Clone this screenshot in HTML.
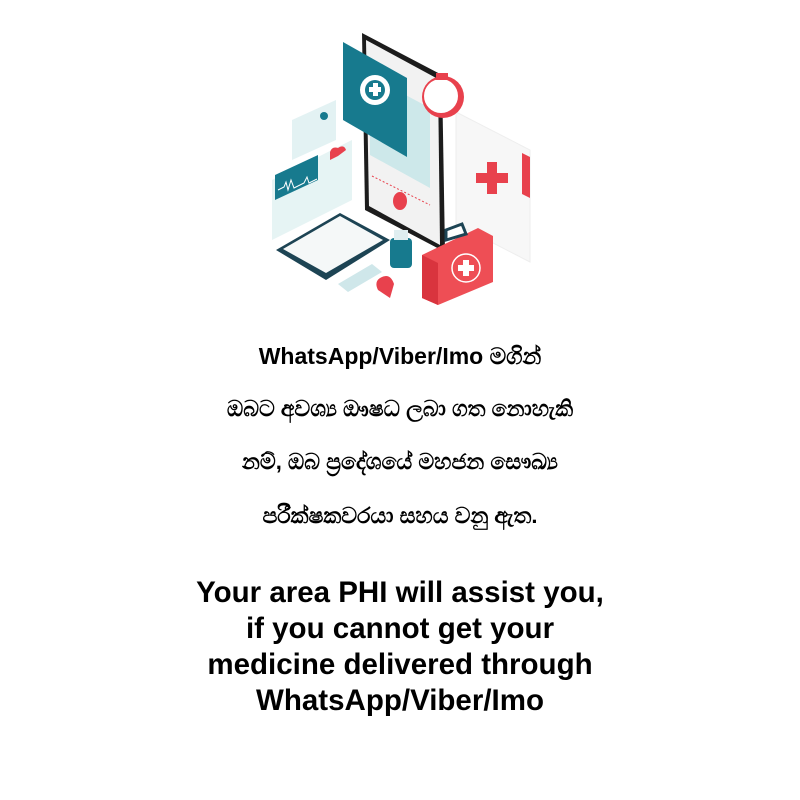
<!DOCTYPE html>
<html><head><meta charset="utf-8"><style>
html,body{margin:0;padding:0;background:#fff;width:800px;height:800px;overflow:hidden}
.t{position:absolute;left:0;width:800px;text-align:center;color:#000;font-family:"Liberation Sans","DejaVu Sans",sans-serif;white-space:nowrap}
.s{font-size:22px;font-weight:bold}
.e{font-size:29.5px;font-weight:bold;line-height:36px}
</style></head><body>
<svg width="800" height="320" style="position:absolute;left:0;top:0">
<polygon points="456,112 530,150 530,262 456,224" fill="#f7f7f7" stroke="#eee"/>
<polygon points="522,153 530,157 530,198 522,194" fill="#e8414d"/>
<rect x="476" y="173" width="32" height="10" fill="#e8414d"/>
<rect x="487" y="162" width="10" height="32" fill="#e8414d"/>
<polygon points="362,33 442,75 445,252 365,210" fill="#1c1c1c"/>
<polygon points="366,40 438,79 440,245 369,206" fill="#f2f2f2"/>
<line x1="372" y1="176" x2="430" y2="205" stroke="#e8414d" stroke-dasharray="2,2"/>
<ellipse cx="400" cy="201" rx="7" ry="9" fill="#e8414d"/>
<polygon points="370,76 430,108 430,188 370,155" fill="#cde8ea"/>
<polygon points="343,42 407,78 407,157 343,120" fill="#177a8e"/>
<circle cx="375" cy="90" r="15" fill="#fff"/>
<circle cx="375" cy="90" r="10" fill="#177a8e"/>
<rect x="369" y="87" width="12" height="5" fill="#fff"/><rect x="373" y="83" width="5" height="13" fill="#fff"/>
<circle cx="443" cy="97" r="21" fill="#e8414d"/>
<circle cx="441" cy="96" r="17" fill="#fff"/>
<rect x="436" y="73" width="12" height="7" fill="#e8414d"/>
<polygon points="292,120 336,100 336,140 292,160" fill="#e3f2f3"/>
<circle cx="324" cy="116" r="4" fill="#177a8e"/>
<polygon points="272,180 352,140 352,200 272,240" fill="#e6f4f4"/>
<polygon points="275,175 318,155 318,180 275,200" fill="#177a8e"/>
<path d="M278,190 l6,-3 l2,-5 l2,8 l3,-10 l3,8 l10,-5 l3,-6 l2,6 l8,-4" stroke="#fff" fill="none" stroke-width="1"/>
<path d="M330,160 l8,-4 l8,-6 q-2,-6 -8,-2 q-6,-2 -8,4z" fill="#e8414d"/>
<polygon points="276,250 340,213 390,240 326,280" fill="#1d4454"/>
<polygon points="283,249 340,216 383,240 326,273" fill="#f5f8f8"/>
<rect x="390" y="238" width="22" height="30" rx="4" fill="#177a8e"/>
<rect x="394" y="230" width="14" height="10" fill="#dfeef0"/>
<polygon points="338,284 372,264 382,272 348,292" fill="#cfe7ea"/>
<path d="M380,278 q10,-6 14,6 l-4,14 l-12,-8 q-4,-8 2,-12z" fill="#e8414d"/>
<polygon points="422,255 478,228 493,236 493,282 438,305 422,298" fill="#ee4e55"/>
<polygon points="422,255 438,263 438,305 422,298" fill="#d9343e"/>
<polygon points="446,240 446,230 462,224 466,234" fill="none" stroke="#1d4454" stroke-width="3"/>
<circle cx="466" cy="268" r="14" fill="none" stroke="#fff" stroke-width="1.5"/>
<rect x="458" y="265" width="16" height="6" fill="#fff"/><rect x="463" y="260" width="6" height="16" fill="#fff"/>
</svg>
<div class="t s" style="top:343px;font-size:23px">WhatsApp/Viber/Imo මගින්</div>
<div class="t s" style="top:396px">ඔබට අවශ්‍ය ඖෂධ ලබා ගත නොහැකි</div>
<div class="t s" style="top:449px">නම්, ඔබ ප්‍රදේශයේ මහජන සෞඛ්‍ය</div>
<div class="t s" style="top:503px">පරීක්ෂකවරයා සහය වනු ඇත.</div>
<div class="t e" style="top:575px">Your area PHI will assist you,<br>if you cannot get your<br>medicine delivered through<br>WhatsApp/Viber/Imo</div>
</body></html>
